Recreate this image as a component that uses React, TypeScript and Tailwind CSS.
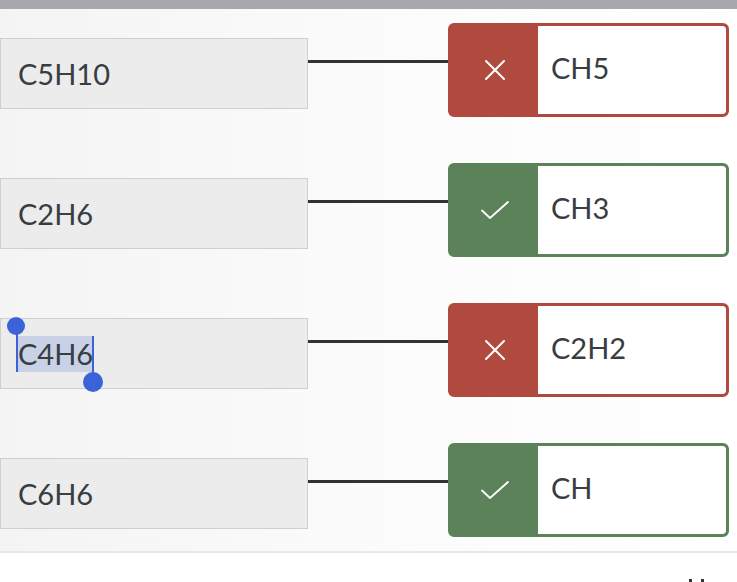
import React from 'react';

type Match = { left: string; right: string; ok: boolean; selected?: boolean };

const rows: Match[] = [
  { left: 'C5H10', right: 'CH5', ok: false },
  { left: 'C2H6', right: 'CH3', ok: true },
  { left: 'C4H6', right: 'C2H2', ok: false, selected: true },
  { left: 'C6H6', right: 'CH', ok: true },
];

function XIcon() {
  return (
    <svg width="22" height="22" viewBox="0 0 22 22" fill="none" stroke="white" strokeWidth="2" strokeLinecap="round">
      <path d="M2 2L20 20M20 2L2 20" />
    </svg>
  );
}

function CheckIcon() {
  return (
    <svg width="30" height="20" viewBox="0 0 30 20" fill="none" stroke="white" strokeWidth="1.8" strokeLinecap="round" strokeLinejoin="round">
      <path d="M2 10.5L10 18L28 2" />
    </svg>
  );
}

function LeftBox({ text, selected }: { text: string; selected?: boolean }) {
  return (
    <div className="mt-[15px] flex h-[71px] w-[308px] shrink-0 items-center border-[1.5px] border-[#cfcfcf] bg-[#ececec] pl-[17px] text-[29px] text-[#383d41]">
      {selected ? (
        <span className="relative bg-[#c8d1e6] leading-[36px]">
          {text}
          <span className="absolute left-[-2px] top-[-10px] h-[46px] w-[2px] bg-[#3b62d6]" />
          <span className="absolute left-[-11px] top-[-19px] h-[18px] w-[18px] rounded-full bg-[#3b62d6]" />
          <span className="absolute right-[-1px] top-0 h-[46px] w-[2px] bg-[#3b62d6]" />
          <span className="absolute right-[-10px] top-[36px] h-[20px] w-[20px] rounded-full bg-[#3b62d6]" />
        </span>
      ) : (
        <span className="leading-[36px]">{text}</span>
      )}
    </div>
  );
}

function RightBox({ text, ok }: { text: string; ok: boolean }) {
  return (
    <div
      className={`flex h-[94px] w-[281px] shrink-0 overflow-hidden rounded-[6px] border-[3px] ${
        ok ? 'border-[#5b8259] bg-[#5b8259]' : 'border-[#b04a3e] bg-[#b04a3e]'
      }`}
    >
      <div className="flex w-[87px] shrink-0 items-center justify-center">{ok ? <CheckIcon /> : <XIcon />}</div>
      <div className="flex flex-1 items-center rounded-r-[3px] bg-white pb-[5px] pl-[13px] text-[29px] text-[#383d41]">{text}</div>
    </div>
  );
}

export default function App() {
  return (
    <div className="h-[582px] w-[737px] overflow-hidden bg-[#a8a8ac] pt-[9px] font-['Lato',sans-serif]">
      <div className="h-full rounded-tr-[14px] bg-white">
        <div className="flex flex-col gap-[46px] bg-gradient-to-r from-[#f4f4f4] via-[#fbfbfb] to-white pt-[14px] pb-[14px]">
          {rows.map((r) => (
            <div key={r.left} className="flex items-start">
              <LeftBox text={r.left} selected={r.selected} />
              <div className="mt-[37px] h-[3px] w-[140px] shrink-0 bg-[#2e3338]" />
              <RightBox text={r.right} ok={r.ok} />
            </div>
          ))}
        </div>
        <div className="h-[2px] bg-[#e8e8e8]" />
        <div className="flex h-[29px] items-end justify-end pr-[33px]">
          <div className="flex gap-[9px]">
            <span className="h-[3px] w-[3px] bg-[#333]" />
            <span className="h-[3px] w-[3px] bg-[#333]" />
          </div>
        </div>
      </div>
    </div>
  );
}
